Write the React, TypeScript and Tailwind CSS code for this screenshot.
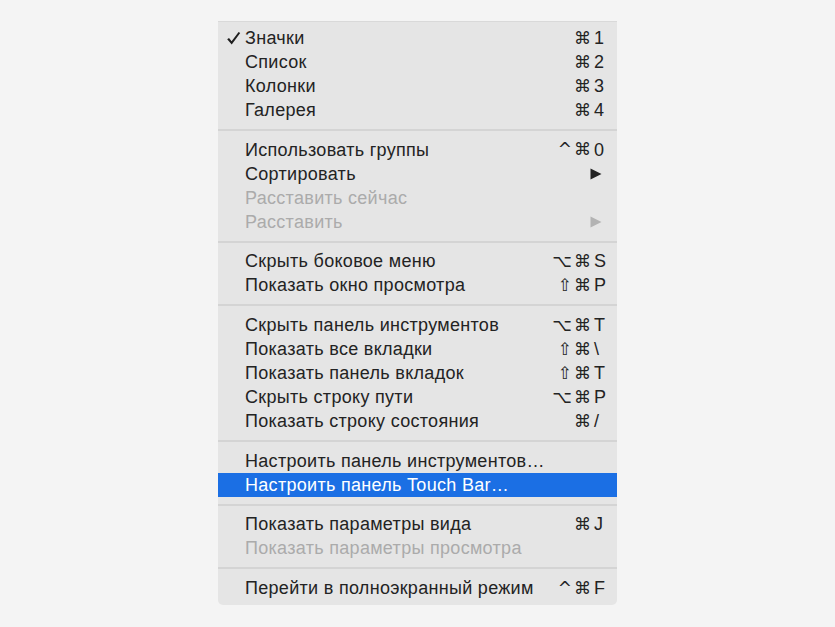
import React from "react";

type Item = {
  label: string;
  mods?: string;
  keyChar?: string;
  disabled?: boolean;
  checked?: boolean;
  submenu?: boolean;
  highlighted?: boolean;
};

const groups: Item[][] = [
  [
    { label: "Значки", mods: "⌘", keyChar: "1", checked: true },
    { label: "Список", mods: "⌘", keyChar: "2" },
    { label: "Колонки", mods: "⌘", keyChar: "3" },
    { label: "Галерея", mods: "⌘", keyChar: "4" },
  ],
  [
    { label: "Использовать группы", mods: "^⌘", keyChar: "0" },
    { label: "Сортировать", submenu: true },
    { label: "Расставить сейчас", disabled: true },
    { label: "Расставить", disabled: true, submenu: true },
  ],
  [
    { label: "Скрыть боковое меню", mods: "⌥⌘", keyChar: "S" },
    { label: "Показать окно просмотра", mods: "⇧⌘", keyChar: "P" },
  ],
  [
    { label: "Скрыть панель инструментов", mods: "⌥⌘", keyChar: "T" },
    { label: "Показать все вкладки", mods: "⇧⌘", keyChar: "\\" },
    { label: "Показать панель вкладок", mods: "⇧⌘", keyChar: "T" },
    { label: "Скрыть строку пути", mods: "⌥⌘", keyChar: "P" },
    { label: "Показать строку состояния", mods: "⌘", keyChar: "/" },
  ],
  [
    { label: "Настроить панель инструментов…" },
    { label: "Настроить панель Touch Bar…", highlighted: true },
  ],
  [
    { label: "Показать параметры вида", mods: "⌘", keyChar: "J" },
    { label: "Показать параметры просмотра", disabled: true },
  ],
  [{ label: "Перейти в полноэкранный режим", mods: "^⌘", keyChar: "F" }],
];

function Check() {
  return (
    <svg width="15" height="15" viewBox="0 0 15 15" className="block">
      <path
        d="M1.2 8.2 L3 6.9 L5.6 10.3 L12.6 0.9 L14.2 2.1 L5.7 13.6 Z"
        fill="#1e1e1e"
      />
    </svg>
  );
}

function Arrow({ color }: { color: string }) {
  return (
    <svg width="12" height="12" viewBox="0 0 12 12" className="block">
      <path d="M0.5 0.5 L11.5 6 L0.5 11.5 Z" fill={color} />
    </svg>
  );
}

function Row({ item }: { item: Item }) {
  const textColor = item.highlighted
    ? "text-white"
    : item.disabled
    ? "text-[#ababab]"
    : "text-[#232323]";
  return (
    <div
      className={`flex h-[24px] items-center ${
        item.highlighted ? "bg-[#1b6fe4]" : ""
      } ${textColor}`}
    >
      <div className="flex w-[27px] shrink-0 justify-end pr-[4px] pt-[1px]">
        {item.checked ? <Check /> : null}
      </div>
      <div className="flex-1 whitespace-nowrap tracking-[0.3px]">{item.label}</div>
      {item.submenu ? (
        <div className="pr-[15px]">
          <Arrow color={item.disabled ? "#b3b3b3" : "#232323"} />
        </div>
      ) : item.keyChar ? (
        <div className="flex items-center pr-[10px]">
          <span className="pr-[1px] tracking-[2px] font-['DejaVu_Sans',sans-serif] text-[17px]">
            {item.mods}
          </span>
          <span className="w-[13px]">{item.keyChar}</span>
        </div>
      ) : null}
    </div>
  );
}

export default function App() {
  return (
    <div className="min-h-[627px] w-full bg-[#f4f4f4] pt-[21px] font-['Liberation_Sans','DejaVu_Sans',sans-serif] text-[18px] leading-none">
      <div className="mx-auto w-[399px] rounded-b-[5px] border-t border-[#d9d9d9] bg-[#e5e5e5] pt-[4px] pb-[5px]">
        {groups.map((g, gi) => (
          <div key={gi}>
            {gi > 0 && (
              <div className="pt-[7px] pb-[6.7px]">
                <div className="h-[2px] bg-[#d4d4d4]" />
              </div>
            )}
            {g.map((it, ii) => (
              <Row key={ii} item={it} />
            ))}
          </div>
        ))}
      </div>
    </div>
  );
}
